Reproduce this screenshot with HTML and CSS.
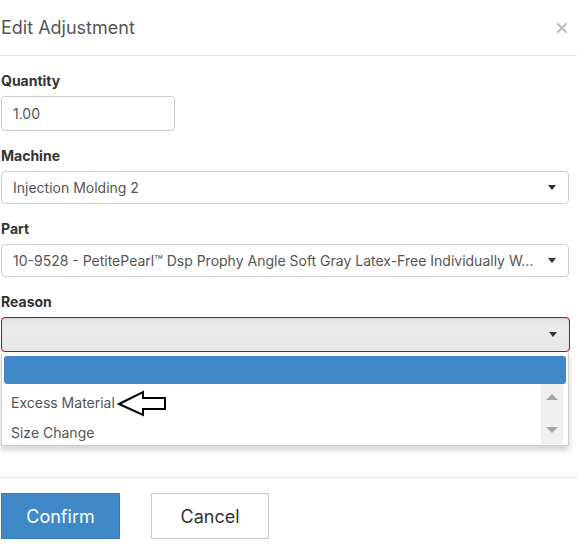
FILE: index.html
```html
<!DOCTYPE html>
<html>
<head>
<meta charset="utf-8">
<link rel="stylesheet" href="styles.css">
</head>
<body>
<div class="modal">
  <div class="modal-header">
    <h4 class="modal-title">Edit Adjustment</h4>
    <span class="close" aria-label="Close">
      <svg width="10" height="10" viewBox="0 0 10 10"><path d="M1 1 L9 9 M9 1 L1 9" stroke="#c2c2c2" stroke-width="2.4" stroke-linecap="square"/></svg>
    </span>
  </div>
  <div class="modal-body">
    <div class="form-group">
      <label class="label">Quantity</label>
      <div class="input qty">1.00</div>
    </div>
    <div class="form-group">
      <label class="label">Machine</label>
      <div class="select"><span class="select-text">Injection Molding 2</span><span class="caret"></span></div>
    </div>
    <div class="form-group">
      <label class="label">Part</label>
      <div class="select"><span class="select-text">10-9528 - PetitePearl™ Dsp Prophy Angle Soft Gray Latex-Free Individually W...</span><span class="caret"></span></div>
    </div>
    <div class="form-group reason-group">
      <label class="label">Reason</label>
      <div class="select reason"><span class="select-text"></span><span class="caret"></span></div>
      <div class="dropdown">
        <div class="opt-active"></div>
        <div class="list-wrap">
          <div class="list">
            <div class="opt">Excess Material</div>
            <div class="opt">Size Change</div>
          </div>
          <div class="scrollbar">
            <span class="sb-up"></span>
            <span class="sb-down"></span>
          </div>
        </div>
        <svg class="pointer" width="52" height="28" viewBox="0 0 52 28">
          <polygon points="2,14 26,2 26,8 48,8 48,19 26,19 26,25" fill="#fff" stroke="#000" stroke-width="2" stroke-linejoin="miter"/>
        </svg>
      </div>
    </div>
  </div>
  <div class="modal-footer">
    <button class="btn btn-primary">Confirm</button>
    <button class="btn btn-default">Cancel</button>
  </div>
</div>
</body>
</html>
```

FILE: styles.css
```css
* { box-sizing: border-box; }
html, body { margin: 0; padding: 0; background: #fff; }
body {
  font-family: Inter, "Noto Sans", "Liberation Sans", sans-serif;
  color: #333;
  font-size: 14px;
}
.modal { width: 577px; }
.modal-header {
  height: 56px;
  border-bottom: 1px solid #e5e5e5;
  display: flex;
  align-items: center;
  justify-content: space-between;
  padding: 0 10px 0 1px;
}
.modal-title {
  margin: 0;
  font-size: 18px;
  font-weight: 400;
  color: #555;
  line-height: 22px;
  padding-top: 1px;
}
.close { display: flex; padding-top: 1px; }
.modal-body {
  padding: 15px 8px 110px 1px;
}
.form-group { margin-bottom: 15px; }
.reason-group { position: relative; }
.label {
  display: block;
  font-weight: 700;
  font-size: 14px;
  line-height: 20px;
  height: 20px;
  margin-bottom: 5px;
  color: #333;
}
.input, .select {
  border: 1px solid #ccc;
  border-radius: 4px;
  height: 33px;
  padding: 0 11px;
  display: flex;
  align-items: center;
  color: #555;
  font-size: 14px;
  background: #fff;
}
.qty { width: 174px; height: 35px; }
.select { width: 568px; justify-content: space-between; }
.select-text {
  white-space: nowrap;
  overflow: hidden;
  flex: 1;
  padding-right: 20px;
}
.caret {
  width: 0; height: 0;
  border-left: 4px solid transparent;
  border-right: 4px solid transparent;
  border-top: 5px solid #333;
  margin-right: 1px;
  flex: none;
}
.reason {
  width: 569px;
  height: 35px;
  border-color: #cc0000;
  background: linear-gradient(#e4e4e4, #ebebeb 30%, #e8e8e8);
  box-shadow: inset 0 1px 2px rgba(0,0,0,0.06);
}
.dropdown {
  position: absolute;
  left: 0;
  top: 61px;
  width: 568px;
  height: 93px;
  background: #fff;
  border: 1px solid #cfcfcf;
  border-top: none;
  padding: 3px 2px 2px 2px;
  box-shadow: 0 4px 6px rgba(0,0,0,0.18);
}
.opt-active {
  height: 28px;
  background: #3f89c9;
  border-radius: 3px;
}
.list-wrap {
  display: flex;
  height: 60px;
}
.list {
  flex: 1;
  overflow: hidden;
  padding-top: 4px;
}
.opt {
  height: 30px;
  line-height: 30px;
  padding-left: 7px;
  color: #555;
  font-size: 14px;
}
.scrollbar {
  width: 22px;
  margin-right: 3px;
  background: #f0f0f0;
  display: flex;
  flex-direction: column;
  align-items: center;
  justify-content: space-between;
  padding: 10px 0 11px;
}
.sb-up {
  width: 0; height: 0;
  border-left: 6px solid transparent;
  border-right: 6px solid transparent;
  border-bottom: 6px solid #a6a6a6;
}
.sb-down {
  width: 0; height: 0;
  border-left: 6px solid transparent;
  border-right: 6px solid transparent;
  border-top: 6px solid #a6a6a6;
}
.pointer {
  position: absolute;
  left: 115px;
  top: 37px;
}
.modal-footer {
  border-top: 1px solid #e5e5e5;
  padding: 15px 0 0 1px;
  display: flex;
  gap: 31px;
}
.btn {
  height: 46px;
  font-family: inherit;
  font-size: 18px;
  border-radius: 0;
  cursor: pointer;
}
.btn-primary {
  width: 119px;
  background: #3f89c9;
  border: 1px solid #3579b5;
  color: #fff;
}
.btn-default {
  width: 118px;
  background: #fff;
  border: 1px solid #ccc;
  color: #333;
}
```
